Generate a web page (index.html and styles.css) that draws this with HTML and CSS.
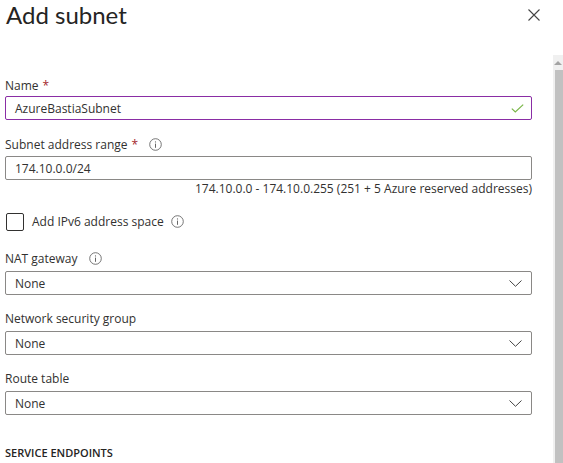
FILE: index.html
```html
<!DOCTYPE html>
<html>
<head>
<meta charset="utf-8">
<link rel="stylesheet" href="styles.css">
</head>
<body>
<div class="panel">
  <header class="header">
    <h1 class="title">Add subnet</h1>
    <button class="close" aria-label="Close">
      <svg width="12" height="12" viewBox="0 0 12 12"><path d="M0.5 0.5L11.5 11.5M11.5 0.5L0.5 11.5" stroke="#444" stroke-width="1.1" fill="none"/></svg>
    </button>
  </header>
  <div class="body">
    <form class="form">
      <div class="field f-name">
        <label class="label">Name <span class="req">*</span></label>
        <div class="input valid">
          <span class="value">AzureBastiaSubnet</span>
          <svg class="check" width="13" height="9" viewBox="0 0 13 9"><path d="M0.8 4.6L4.3 8L12.2 0.6" stroke="#7ab648" stroke-width="1.2" fill="none"/></svg>
        </div>
      </div>
      <div class="field f-range">
        <label class="label">Subnet address range <span class="req">*</span>
          <svg class="info" width="13" height="13" viewBox="0 0 13 13"><circle cx="6.5" cy="6.5" r="5.8" stroke="#666" stroke-width="0.9" fill="none"/><path d="M6.5 5.6V9.8" stroke="#666" stroke-width="1"/><circle cx="6.5" cy="3.9" r="0.6" fill="#666"/></svg>
        </label>
        <div class="input"><span class="value">174.10.0.0/24</span></div>
        <div class="hint">174.10.0.0 - 174.10.0.255 (251 + 5 Azure reserved addresses)</div>
      </div>
      <div class="checkrow">
        <span class="box"></span>
        <span class="checklabel">Add IPv6 address space</span>
        <svg class="info" width="13" height="13" viewBox="0 0 13 13"><circle cx="6.5" cy="6.5" r="5.8" stroke="#666" stroke-width="0.9" fill="none"/><path d="M6.5 5.6V9.8" stroke="#666" stroke-width="1"/><circle cx="6.5" cy="3.9" r="0.6" fill="#666"/></svg>
      </div>
      <div class="field f-dd">
        <label class="label">NAT gateway
          <svg class="info" width="13" height="13" viewBox="0 0 13 13"><circle cx="6.5" cy="6.5" r="5.8" stroke="#666" stroke-width="0.9" fill="none"/><path d="M6.5 5.6V9.8" stroke="#666" stroke-width="1"/><circle cx="6.5" cy="3.9" r="0.6" fill="#666"/></svg>
        </label>
        <div class="input select"><span class="value">None</span>
          <svg class="chev" width="13" height="7" viewBox="0 0 13 7"><path d="M0.5 0.5L6.5 6.3L12.5 0.5" stroke="#444" stroke-width="1" fill="none"/></svg>
        </div>
      </div>
      <div class="field f-dd">
        <label class="label">Network security group</label>
        <div class="input select"><span class="value">None</span>
          <svg class="chev" width="13" height="7" viewBox="0 0 13 7"><path d="M0.5 0.5L6.5 6.3L12.5 0.5" stroke="#444" stroke-width="1" fill="none"/></svg>
        </div>
      </div>
      <div class="field f-dd">
        <label class="label">Route table</label>
        <div class="input select"><span class="value">None</span>
          <svg class="chev" width="13" height="7" viewBox="0 0 13 7"><path d="M0.5 0.5L6.5 6.3L12.5 0.5" stroke="#444" stroke-width="1" fill="none"/></svg>
        </div>
      </div>
      <h2 class="section">SERVICE ENDPOINTS</h2>
    </form>
    <div class="scrollbar">
      <div class="arrow"></div>
      <div class="thumb"></div>
    </div>
  </div>
</div>
</body>
</html>
```

FILE: styles.css
```css
* { box-sizing: border-box; }
html, body { margin: 0; padding: 0; background: #fff; overflow: hidden; }
body {
  font-family: "Segoe UI", "Open Sans", "Noto Sans", sans-serif;
  color: #323130;
  width: 563px;
  height: 463px;
}
.panel { display: flex; flex-direction: column; height: 463px; }
.header {
  display: flex;
  justify-content: space-between;
  align-items: flex-start;
  height: 55px;
  padding: 0 23px 0 6px;
}
.title {
  margin: 0;
  font-family: "Lato", "Segoe UI", "Open Sans", sans-serif;
  font-size: 24px;
  font-weight: 400;
  line-height: 30px;
  color: #252423;
}
.close {
  border: 0;
  background: none;
  padding: 0;
  margin-top: 9px;
  width: 12px;
  height: 12px;
  display: flex;
}
.body { display: flex; flex: 1; min-height: 0; }
.form {
  width: 548px;
  padding: 20px 16px 0 5px;
  display: flex;
  flex-direction: column;
}
.scrollbar {
  width: 10px;
  margin-left: 5px;
  background: #f0f0f0;
  display: flex;
  flex-direction: column;
  align-items: flex-end;
}
.arrow {
  width: 0; height: 0;
  margin: 6px 1px 5px 0;
  border-left: 4px solid transparent;
  border-right: 4px solid transparent;
  border-bottom: 4px solid #a3a3a3;
}
.thumb { width: 8px; flex: 1; background: #c1c1c1; }
.field { display: flex; flex-direction: column; }
.label {
  font-size: 12px;
  line-height: 17px;
  display: flex;
  align-items: center;
  gap: 4px;
  color: #323130;
}
.req { color: #a4262c; }
.info { margin-left: 7px; }
.input {
  height: 24px;
  border: 1px solid #8a8886;
  border-radius: 2px;
  display: flex;
  align-items: center;
  justify-content: space-between;
  padding: 0 7px 0 9px;
  font-size: 12px;
}
.input.valid { border-color: #8a2da5; }
.value { color: #323130; }
.f-name { margin-top: 2px; }
.f-name .label { margin-bottom: 2px; }
.f-range { margin-top: 16px; }
.f-range .label { margin-bottom: 3px; }
.hint {
  text-align: right;
  font-size: 12px;
  line-height: 17px;
}
.checkrow {
  display: flex;
  align-items: center;
  margin-top: 15px;
  height: 19px;
  font-size: 12px;
}
.box {
  width: 18px; height: 18px;
  border: 1px solid #323130;
  border-radius: 2px;
  margin: 0 8px 0 1px;
}
.checkrow .info { margin-left: 7px; }
.f-dd { margin-top: 19px; }
.f-dd + .f-dd { margin-top: 15px; }
.f-dd .label { margin-bottom: 4px; }
.select { padding-right: 9px; }
.section {
  margin: 30px 0 0 0;
  font-size: 11px;
  font-weight: 600;
  line-height: 15px;
  color: #252423;
}
```
